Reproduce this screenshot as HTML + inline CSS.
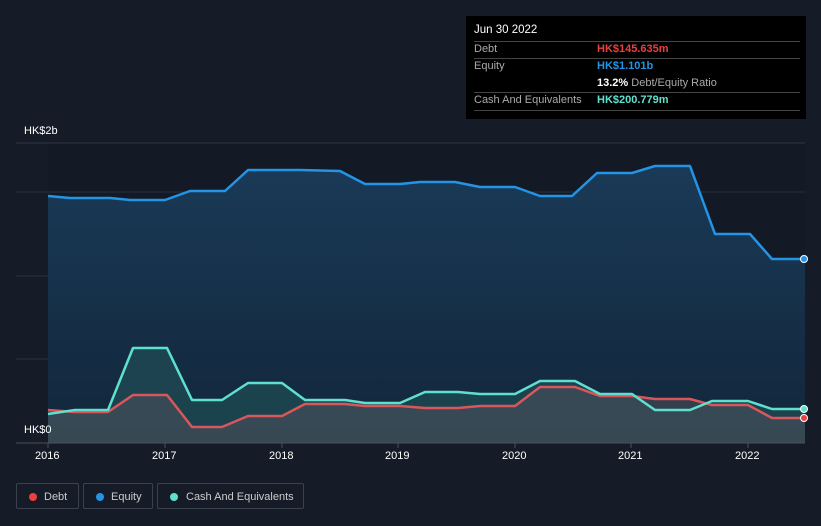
<!DOCTYPE html>
<html><head><meta charset="utf-8"><style>
body{margin:0;width:821px;height:526px;background:#161c27;font-family:"Liberation Sans",sans-serif;overflow:hidden;position:relative}
.tt{position:absolute;left:466px;top:16px;width:340px;height:103px;background:#000;color:#fff;font-size:11px}
.tt .r{position:absolute;left:8px;width:326px;border-top:1px solid #444}
.lab{color:#aaa}
.leg{position:absolute;top:483px;height:26px;border:1px solid #3a414d;border-radius:2px;color:#ccc;font-size:11px;line-height:26px;box-sizing:border-box}
.leg i{position:absolute;top:9px;width:8px;height:8px;border-radius:50%}
.ax{position:absolute;top:450px;color:#fff;font-size:11px}
</style></head><body>
<div class="tt">
<div style="position:absolute;left:8px;top:8px;font-size:11.5px">Jun 30 2022</div>
<div class="r" style="top:25px"></div>
<div class="lab" style="position:absolute;left:8px;top:27px">Debt</div><div style="position:absolute;left:131px;top:27px;color:#e8413f;font-weight:bold">HK$145.635m</div>
<div class="r" style="top:42px"></div>
<div class="lab" style="position:absolute;left:8px;top:44px">Equity</div><div style="position:absolute;left:131px;top:44px;color:#2394e6;font-weight:bold">HK$1.101b</div>
<div style="position:absolute;left:131px;top:61px"><b>13.2%</b> <span class="lab">Debt/Equity Ratio</span></div>
<div class="r" style="top:76px"></div>
<div class="lab" style="position:absolute;left:8px;top:78px">Cash And Equivalents</div><div style="position:absolute;left:131px;top:78px;color:#5fe0cf;font-weight:bold">HK$200.779m</div>
<div class="r" style="top:94px"></div>
</div>
<div style="position:absolute;left:24px;top:125px;color:#fff;font-size:11px">HK$2b</div>
<svg style="position:absolute;left:0;top:0" width="821" height="526">
<defs><linearGradient id="g" x1="0" y1="0" x2="0" y2="1"><stop offset="0" stop-color="#1a3a57"/><stop offset="1" stop-color="#12263a"/></linearGradient></defs>
<rect x="48" y="143" width="757" height="300" fill="#131925"/>
<line x1="16" y1="143" x2="805" y2="143" stroke="#2e3440"/>
<line x1="16" y1="192" x2="805" y2="192" stroke="#2a3140"/>
<line x1="16" y1="276" x2="805" y2="276" stroke="#2a3140"/>
<line x1="16" y1="359" x2="805" y2="359" stroke="#2a3140"/>
<polygon fill="url(#g)" points="48,196 70,198 110,198 130,200 165,200 190,191 225,191 248,170 300,170 340,171 365,184 400,184 420,182 455,182 480,187 515,187 540,196 572,196 597,173 632,173 655,166 690,166 715,234 750,234 772,259 805,259 805,443 48,443"/>
<polygon fill="#1e4a52" fill-opacity="0.8" points="48,414 75,410 108,410 133,348 167,348 192,400 222,400 248,383 282,383 305,400 345,400 365,403 400,403 425,392 458,392 480,394 515,394 540,381 575,381 600,394 632,394 655,410 690,410 712,401 748,401 772,409 805,409 805,443 48,443"/>
<polygon fill="#4a4f58" fill-opacity="0.6" points="48,410 75,412 108,412 133,395 167,395 192,427 222,427 248,416 282,416 305,404 345,404 365,406 400,406 425,408 458,408 480,406 515,406 540,387 575,387 600,396 632,396 655,399 690,399 712,405 748,405 772,418 805,418 805,443 48,443"/>
<polyline fill="none" stroke="#2394e6" stroke-width="2.5" stroke-linejoin="round" points="48,196 70,198 110,198 130,200 165,200 190,191 225,191 248,170 300,170 340,171 365,184 400,184 420,182 455,182 480,187 515,187 540,196 572,196 597,173 632,173 655,166 690,166 715,234 750,234 772,259 805,259"/>
<polyline fill="none" stroke="#d9575c" stroke-width="2.5" stroke-linejoin="round" points="48,410 75,412 108,412 133,395 167,395 192,427 222,427 248,416 282,416 305,404 345,404 365,406 400,406 425,408 458,408 480,406 515,406 540,387 575,387 600,396 632,396 655,399 690,399 712,405 748,405 772,418 805,418"/>
<polyline fill="none" stroke="#5fe0cf" stroke-width="2.5" stroke-linejoin="round" points="48,414 75,410 108,410 133,348 167,348 192,400 222,400 248,383 282,383 305,400 345,400 365,403 400,403 425,392 458,392 480,394 515,394 540,381 575,381 600,394 632,394 655,410 690,410 712,401 748,401 772,409 805,409"/>
<circle cx="804" cy="259" r="3.5" fill="#2394e6" stroke="#fff"/>
<circle cx="804" cy="409" r="3.5" fill="#5fe0cf" stroke="#fff"/>
<circle cx="804" cy="418" r="3.5" fill="#e8413f" stroke="#fff"/>
<line x1="16" y1="443" x2="805" y2="443" stroke="#4a505a"/>
<g stroke="#4a505a"><line x1="48" y1="443" x2="48" y2="448"/><line x1="165" y1="443" x2="165" y2="448"/><line x1="282" y1="443" x2="282" y2="448"/><line x1="398" y1="443" x2="398" y2="448"/><line x1="515" y1="443" x2="515" y2="448"/><line x1="631" y1="443" x2="631" y2="448"/><line x1="748" y1="443" x2="748" y2="448"/></g>
</svg>
<div style="position:absolute;left:24px;top:424px;color:#fff;font-size:11px">HK$0</div>
<div class="ax" style="left:35px">2016</div><div class="ax" style="left:152px">2017</div><div class="ax" style="left:269px">2018</div><div class="ax" style="left:385px">2019</div><div class="ax" style="left:502px">2020</div><div class="ax" style="left:618px">2021</div><div class="ax" style="left:735px">2022</div>
<div class="leg" style="left:16px;width:63px"><i style="left:12px;background:#e8413f"></i><span style="position:absolute;left:27px">Debt</span></div>
<div class="leg" style="left:83px;width:70px"><i style="left:12px;background:#2394e6"></i><span style="position:absolute;left:27px">Equity</span></div>
<div class="leg" style="left:157px;width:147px"><i style="left:12px;background:#5fe0cf"></i><span style="position:absolute;left:28px">Cash And Equivalents</span></div>
</body></html>
